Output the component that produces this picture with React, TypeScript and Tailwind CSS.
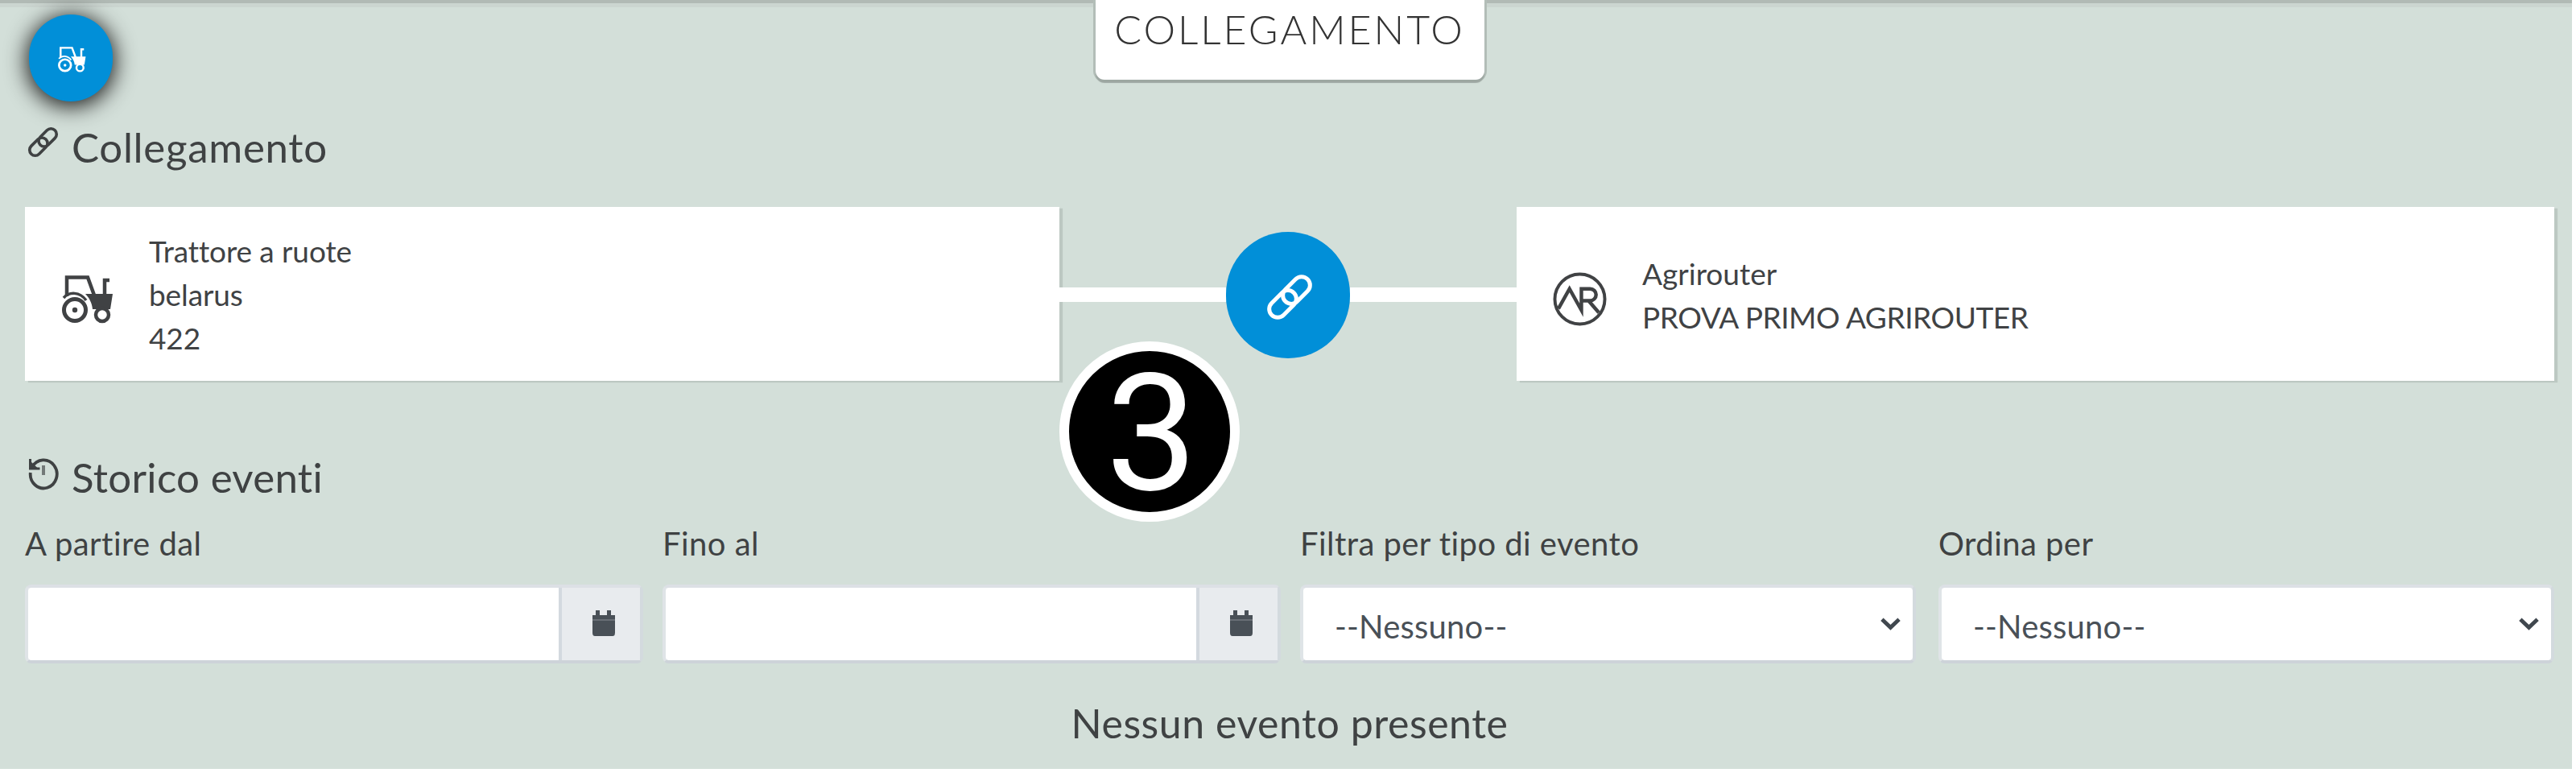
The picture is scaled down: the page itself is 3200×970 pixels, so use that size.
import type { ReactNode } from "react";

function LinkIcon({ className, stroke = 5 }: { className: string; stroke?: number }) {
  return (
    <svg viewBox="0 0 56 56" fill="none" stroke="currentColor" strokeWidth={stroke} className={className}>
      <g transform="rotate(-45 28 28)">
        <rect x="-3.5" y="17.5" width="39" height="21" rx="10.500" />
        <rect x="20.5" y="17.5" width="39" height="21" rx="10.500" />
      </g>
    </svg>
  );
}

function TractorIcon({ className }: { className: string }) {
  return (
    <svg viewBox="0 0 64 60" preserveAspectRatio="none" fill="none" stroke="currentColor" strokeWidth="4.500" className={className}>
      <path d="M6 26V2.5h26l8 22" />
      <path d="M53 25V6h6" />
      <path d="M29 23h34l-3 19H38c-1-8-4-14-9-19z" fill="currentColor" stroke="none" />
      <path d="M2 28c7-8 20-8 28 3" strokeWidth="3.500" />
      <circle cx="16" cy="43" r="13.5" strokeWidth="5" />
      <circle cx="16" cy="43" r="3.2" fill="currentColor" stroke="none" />
      <circle cx="50" cy="49" r="8" className="fill-(--wheel)" />
    </svg>
  );
}

function HistoryIcon({ className }: { className: string }) {
  return (
    <svg viewBox="0 0 38 42" fill="none" stroke="currentColor" strokeWidth="3.800" className={className}>
      <path d="M5 12A16.500 17.500 0 1 1 2.800 19" />
      <path d="M2.500 2v12h12" strokeWidth="3" />
      <path d="M3 5v9.500h10z" fill="currentColor" stroke="none" />
      <path d="M19 10v12" strokeWidth="4" opacity=".65" />
    </svg>
  );
}

function RouterIcon({ className }: { className: string }) {
  return (
    <svg viewBox="0 0 68 68" fill="none" stroke="currentColor" strokeWidth="4" className={className}>
      <circle cx="34" cy="34" r="31.500" />
      <path d="M7 46 21 21l15 27V21h11a7.500 7.500 0 0 1 0 15H37m8 0 13 15" strokeWidth="4.500" />
    </svg>
  );
}

function CalendarIcon() {
  return (
    <svg viewBox="0 0 32 36" className="ml-[7px] h-9 w-8 text-[#495057]" fill="currentColor">
      <path d="M2 7h4V1h5v6h9V1h5v6h5v5H2z" />
      <path d="M2 14h28v15q0 4-3 4H5q-3 0-3-4z" />
      <path d="M2 11h28v4H2z" opacity=".8" />
    </svg>
  );
}

function Chevron() {
  return (
    <svg viewBox="0 0 28 18" className="h-[18px] w-[27px] text-[#40474e]" fill="none" stroke="currentColor" strokeWidth="5">
      <path d="m3 3 11 10.500L25 3" />
    </svg>
  );
}

function Heading({ icon, children }: { icon: ReactNode; children: ReactNode }) {
  return (
    <h2 className="flex h-[60px] items-start pl-[35px] text-[51px] leading-[60px] tracking-[0.7px] text-[#3f4243]">
      <span className="mr-[15px] flex w-[39px] shrink-0">{icon}</span>
      {children}
    </h2>
  );
}

function Label({ children }: { children: ReactNode }) {
  return <label className="block h-[75px] text-[40px] leading-[48px] tracking-[0.45px] whitespace-nowrap text-[#3f4243]">{children}</label>;
}

const box = "flex h-[98px] border-4 border-t-[#dce0e5] border-r-[#d3dade] border-b-[#cdd3d9] border-l-[#dfe4e7] rounded-[8px] bg-white";

function DateField({ label }: { label: string }) {
  return (
    <div className="w-[768px]">
      <Label>{label}</Label>
      <div className={box}>
        <div className="flex-1" />
        <div className="flex w-[101px] items-center justify-center border-l-4 border-[#d3d9df] bg-[#e8ebee]">
          <CalendarIcon />
        </div>
      </div>
    </div>
  );
}

function SelectField({ label }: { label: string }) {
  return (
    <div className="w-[765px]">
      <Label>{label}</Label>
      <div className={box + " items-center justify-between pr-[14px] pl-[39px]"}>
        <span className="mt-[5px] text-[40px] leading-[48px] tracking-[0.2px] text-[#495057]">--Nessuno--</span>
        <Chevron />
      </div>
    </div>
  );
}

export default function App() {
  return (
    <div className="h-[970px] w-[3200px] overflow-hidden bg-white font-['Lato',sans-serif] [font-variant-ligatures:none]">
      <main className="relative h-[955px] w-[3195px] bg-[#d3dfd9]">
        <header className="flex h-[153px] justify-center border-t-4 border-[#b1bab5]">
          <div className="absolute top-1 left-0 h-[5px] w-full bg-[#cbd5d0]" />
          <button className="absolute top-[18px] left-[36px] flex h-[108px] w-[104px] items-center justify-center rounded-full bg-[#018fd8] pt-[4px] pl-[3px] text-white shadow-[0_4px_27px_3px_rgba(0,0,0,0.85)] [--wheel:#018fd8]">
            <TractorIcon className="h-[32px] w-[35px]" />
          </button>
          <h1 className="relative -mt-1 ml-[9px] h-[99px] w-[483px] rounded-b-[11px] bg-white text-center text-[50px] leading-[73px] font-light tracking-[3px] whitespace-nowrap text-[#333] shadow-[0_4px_1px_#9da7a2,0_0_0_3px_#b3beb8]">
            COLLEGAMENTO
          </h1>
        </header>

        <Heading icon={<LinkIcon className="mt-[5px] h-[37px] w-[37px] overflow-visible" stroke={5.5} />}>Collegamento</Heading>

        <section className="mt-[44px] flex h-[216px] items-center pl-[31px]">
          <article className="flex h-full w-[1285px] items-center bg-white pl-[46px] text-[#404244] shadow-[4px_2px_1px_#bcc8c2]">
            <TractorIcon className="mt-[13px] h-[60px] w-[64px] [--wheel:white]" />
            <p className="mt-[2px] ml-[44px] text-[37px] leading-[54px] tracking-[-0.1px]">
              Trattore a ruote
              <br />
              belarus
              <br />
              422
            </p>
          </article>
          <div className="mt-[1px] h-[18px] w-[207px] bg-white" />
          <div className="mt-[3px] flex h-[157px] w-[154px] items-center justify-center rounded-full bg-[#018fd8] pt-[5px] pl-[4px] text-white">
            <LinkIcon className="h-[56px] w-[56px] overflow-visible" />
          </div>
          <div className="mt-[1px] h-[18px] w-[207px] bg-white" />
          <article className="flex h-full w-[1289px] items-center bg-white pl-[45px] text-[#404244] shadow-[4px_2px_1px_#bcc8c2]">
            <RouterIcon className="mt-[12px] h-[67px] w-[67px]" />
            <p className="mt-[4px] ml-[44px] text-[37px] leading-[54px]">
              Agrirouter
              <br />
              <span className="tracking-[-0.45px]">PROVA PRIMO AGRIROUTER</span>
            </p>
          </article>
        </section>

        <div className="mt-[90px]">
          <Heading icon={<HistoryIcon className="mt-[5px] h-[42px] w-[38px]" />}>
            <span className="tracking-[0.3px]">Storico eventi</span>
          </Heading>
        </div>

        <section className="mt-[28px] grid grid-cols-[792px_792px_793px_765px] pl-[31px]">
          <DateField label="A partire dal" />
          <DateField label="Fino al" />
          <SelectField label="Filtra per tipo di evento" />
          <SelectField label="Ordina per" />
        </section>

        <p className="mt-[44px] pl-[9px] text-center text-[50px] leading-[60px] tracking-[0.55px] text-[#3f4243]">Nessun evento presente</p>

        <div className="absolute top-[424px] left-[1316px] flex h-[224px] w-[224px] items-center justify-center rounded-full border-[12px] border-white bg-black pt-[5px] pl-[5px] font-['Roboto',sans-serif] text-[202px] leading-none text-white">
          3
        </div>
      </main>
    </div>
  );
}
